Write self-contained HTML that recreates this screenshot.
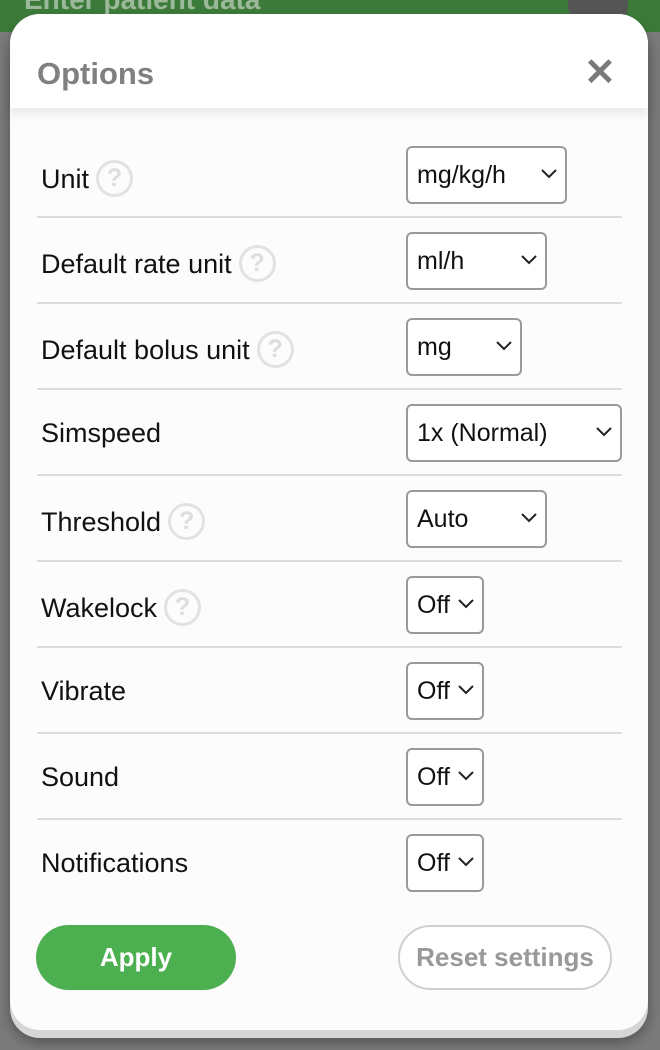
<!DOCTYPE html>
<html><head><meta charset="utf-8"><style>
*{box-sizing:border-box;margin:0;padding:0}
body{width:660px;height:1050px;background:#7b7b7b;font-family:"Liberation Sans",sans-serif;position:relative;overflow:hidden}
.top{position:absolute;left:0;top:0;width:660px;height:32px;background:#3b7a38}
.top span{position:absolute;left:24px;top:-16px;color:#9bb89a;font-weight:bold;font-size:28px}
.circ{position:absolute;left:568px;top:-20px;width:60px;height:50px;border-radius:50%;background:#555}
.modal{position:absolute;left:10px;top:14px;width:638px;height:1016px;background:#fcfcfc;border-radius:30px;box-shadow:0 8px 0 #d6d6d6,0 12px 14px rgba(0,0,0,.35)}
.hdr{position:absolute;left:0;top:0;width:638px;height:94px;background:#fff;border-radius:30px 30px 0 0;box-shadow:0 6px 10px rgba(0,0,0,.08)}
.hdr h1{position:absolute;left:27px;top:42px;font-size:31px;color:#808080;font-weight:bold}
.x{position:absolute;left:574px;top:40px;font-size:38px;color:#7a7a7a;font-weight:bold;line-height:38px}
.lbl{position:absolute;left:41px;font-size:27px;color:#111;line-height:30px}
.q{display:inline-block;width:37px;height:37px;border:3px solid #e2e2e2;border-radius:50%;color:#ddd;font-size:25px;font-weight:bold;text-align:center;line-height:31px;vertical-align:middle;margin-left:7px;margin-top:-4px}
.sel{position:absolute;left:406px;height:58px;border:2px solid #9a9a9a;border-radius:6px;background:#fff;font-size:25px;color:#111;padding-left:9px;line-height:54px}
.sel svg{position:absolute;right:8px;top:21px}
.sep{position:absolute;left:37px;width:585px;height:2px;background:#dcdcdc}
.apply{position:absolute;left:36px;top:925px;width:200px;height:65px;border-radius:33px;background:#4caf50;color:#fff;font-weight:bold;font-size:26px;text-align:center;line-height:65px}
.reset{position:absolute;left:398px;top:925px;width:214px;height:65px;border-radius:33px;border:2px solid #cfcfcf;background:#fff;color:#999;font-weight:bold;font-size:26px;text-align:center;line-height:61px;white-space:nowrap}
</style></head><body>
<div class="top"><span>Enter patient data</span><div class="circ"></div></div>
<div class="modal"><div class="hdr"><h1>Options</h1><div class="x">✕</div></div></div>

<div class="lbl" style="top:164px">Unit<span class="q">?</span></div>
<div class="sel" style="top:146px;width:161px">mg/kg/h<svg width="16" height="10"><path d="M1 1l7 7 7-7" fill="none" stroke="#222" stroke-width="2"/></svg></div>
<div class="sep" style="top:216px"></div>

<div class="lbl" style="top:249px">Default rate unit<span class="q">?</span></div>
<div class="sel" style="top:232px;width:141px">ml/h<svg width="16" height="10"><path d="M1 1l7 7 7-7" fill="none" stroke="#222" stroke-width="2"/></svg></div>
<div class="sep" style="top:302px"></div>

<div class="lbl" style="top:335px">Default bolus unit<span class="q">?</span></div>
<div class="sel" style="top:318px;width:116px">mg<svg width="16" height="10"><path d="M1 1l7 7 7-7" fill="none" stroke="#222" stroke-width="2"/></svg></div>
<div class="sep" style="top:388px"></div>

<div class="lbl" style="top:418px">Simspeed</div>
<div class="sel" style="top:404px;width:216px">1x (Normal)<svg width="16" height="10"><path d="M1 1l7 7 7-7" fill="none" stroke="#222" stroke-width="2"/></svg></div>
<div class="sep" style="top:474px"></div>

<div class="lbl" style="top:507px">Threshold<span class="q">?</span></div>
<div class="sel" style="top:490px;width:141px">Auto<svg width="16" height="10"><path d="M1 1l7 7 7-7" fill="none" stroke="#222" stroke-width="2"/></svg></div>
<div class="sep" style="top:560px"></div>

<div class="lbl" style="top:593px">Wakelock<span class="q">?</span></div>
<div class="sel" style="top:576px;width:78px">Off<svg width="16" height="10"><path d="M1 1l7 7 7-7" fill="none" stroke="#222" stroke-width="2"/></svg></div>
<div class="sep" style="top:646px"></div>

<div class="lbl" style="top:676px">Vibrate</div>
<div class="sel" style="top:662px;width:78px">Off<svg width="16" height="10"><path d="M1 1l7 7 7-7" fill="none" stroke="#222" stroke-width="2"/></svg></div>
<div class="sep" style="top:732px"></div>

<div class="lbl" style="top:762px">Sound</div>
<div class="sel" style="top:748px;width:78px">Off<svg width="16" height="10"><path d="M1 1l7 7 7-7" fill="none" stroke="#222" stroke-width="2"/></svg></div>
<div class="sep" style="top:818px"></div>

<div class="lbl" style="top:848px">Notifications</div>
<div class="sel" style="top:834px;width:78px">Off<svg width="16" height="10"><path d="M1 1l7 7 7-7" fill="none" stroke="#222" stroke-width="2"/></svg></div>

<div class="apply">Apply</div>
<div class="reset">Reset settings</div>
</body></html>
